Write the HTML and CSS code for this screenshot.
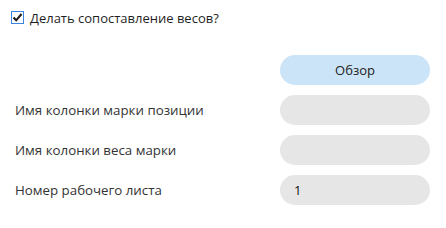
FILE: index.html
```html
<!DOCTYPE html>
<html lang="ru">

<head>
  <meta charset="UTF-8">
  <meta name="viewport" content="width=device-width, initial-scale=1.0">
  <title>Сопоставление весов</title>
  <link rel="stylesheet" href="styles.css">
</head>

<body>
  <div class="panel">
    <label class="check">
      <span class="check-box">
        <svg width="11" height="11" viewBox="0 0 11 11">
          <path d="M1.5 5.5 L4.2 8.3 L9.5 2" fill="none" stroke="#1a1a1a" stroke-width="2" />
        </svg>
      </span>
      <span class="check-text">Делать сопоставление весов?</span>
    </label>

    <div class="form">
      <span class="label"></span>
      <button class="btn">Обзор</button>

      <span class="label">Имя колонки марки позиции</span>
      <div class="field"></div>

      <span class="label">Имя колонки веса марки</span>
      <div class="field"></div>

      <span class="label">Номер рабочего листа</span>
      <div class="field">1</div>
    </div>
  </div>
</body>

</html>
```

FILE: styles.css
```css
html,
body {
  margin: 0;
  padding: 0;
  background-color: #fff;
}

body {
  font-family: "Open Sans", "Noto Sans", sans-serif;
  font-size: 13px;
  color: #1f1f1f;
}

.panel {
  padding: 11px 16px 0 11px;
}

.check {
  display: flex;
  align-items: center;
  gap: 6px;
  height: 13px;
}

.check-box {
  box-sizing: border-box;
  width: 13px;
  height: 13px;
  border: 1px solid #3d86e0;
  background-color: #fff;
  display: flex;
  align-items: center;
  justify-content: center;
}

.check-box svg {
  display: block;
}

.check-text {
  font-size: 13px;
  line-height: 13px;
  padding-top: 2px;
}

.form {
  display: grid;
  grid-template-columns: 1fr 150px;
  grid-auto-rows: 30px;
  row-gap: 10px;
  margin-top: 31px;
  padding-left: 4px;
}

.label {
  display: flex;
  align-items: center;
  font-size: 13.3px;
  color: #333;
}

.btn {
  border: none;
  border-radius: 15px;
  background-color: #cce4f7;
  font-family: inherit;
  font-size: 13px;
  color: #222;
  padding: 0;
}

.field {
  border-radius: 15px;
  background-color: #e6e6e6;
  display: flex;
  align-items: center;
  padding-left: 14px;
  color: #111;
}
```
